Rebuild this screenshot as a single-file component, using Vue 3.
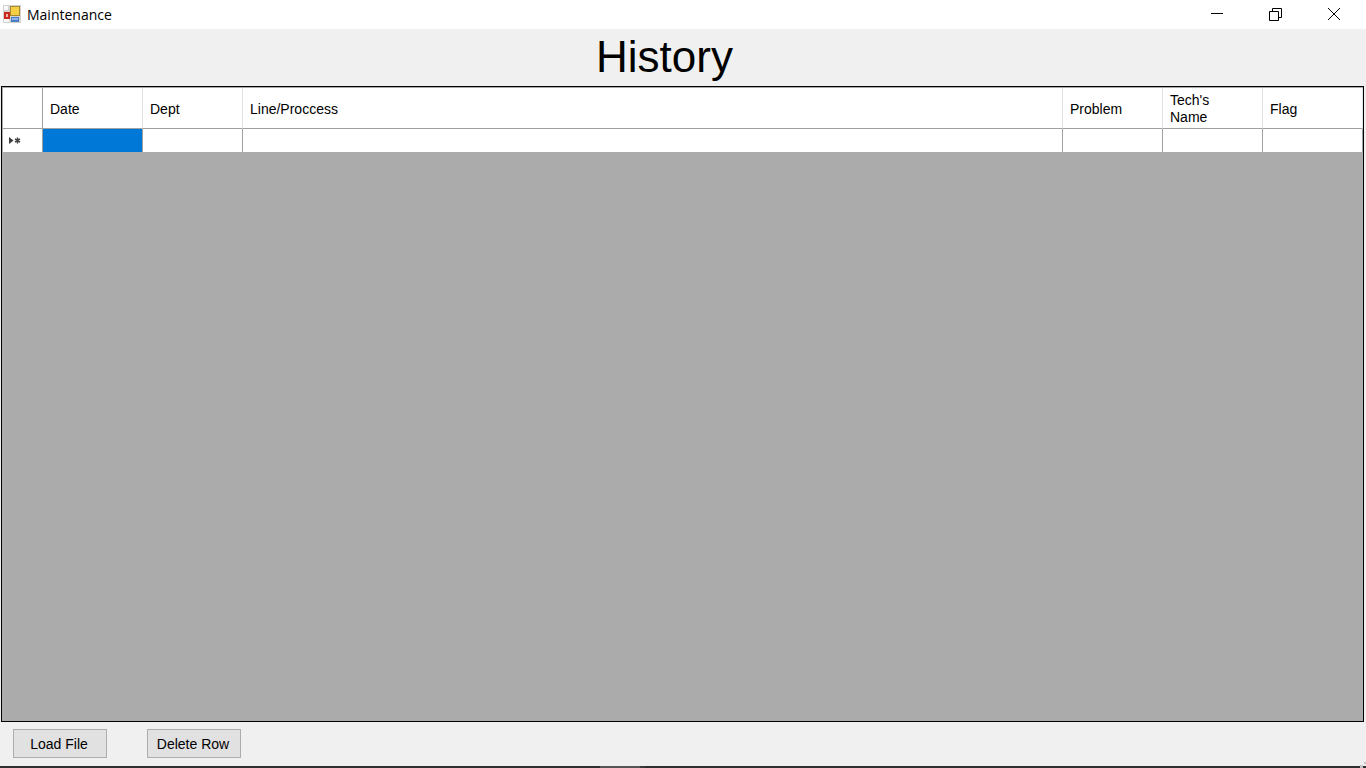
<script setup>
const cols = [
  { label: 'Date', cls: 'c-std' },
  { label: 'Dept', cls: 'c-std' },
  { label: 'Line/Proccess', cls: 'c-wide' },
  { label: 'Problem', cls: 'c-std' },
  { label: "Tech's Name", cls: 'c-std' },
  { label: 'Flag', cls: 'c-std' },
]
</script>

<template>
  <div class="window">
    <header class="titlebar">
      <svg class="app-icon" width="18" height="18" viewBox="0 0 18 18">
        <rect x="0" y="0" width="18" height="18" fill="#d2d2d2" />
        <rect x="1" y="1" width="4" height="4" fill="#f8f8f8" />
        <rect x="1" y="14" width="5" height="3" fill="#f8f8f8" />
        <rect x="1" y="7" width="6" height="7" fill="#c8281e" />
        <rect x="3" y="9" width="2" height="3" fill="#f0b8a8" />
        <rect x="7" y="1" width="10" height="10" fill="#a8882e" />
        <rect x="8" y="2" width="8" height="8" fill="#f7cf45" />
        <rect x="8" y="12" width="8" height="5" fill="#4a7cc8" />
        <rect x="9" y="13" width="6" height="2" fill="#8fb4ea" />
      </svg>
      <span class="app-title">Maintenance</span>
      <div class="win-controls">
        <svg class="ctl" width="58" height="29" viewBox="0 0 58 29">
          <path d="M22 13.5H34" stroke="#000" stroke-width="1" fill="none" />
        </svg>
        <svg class="ctl" width="58" height="29" viewBox="0 0 58 29">
          <path d="M22.5 11.5h9v9h-9zM25.5 11V8.5h9v9H32" stroke="#000" stroke-width="1" fill="none" />
        </svg>
        <svg class="ctl" width="58" height="29" viewBox="0 0 58 29">
          <path d="M23 8l12 12M35 8L23 20" stroke="#000" stroke-width="1" fill="none" />
        </svg>
      </div>
    </header>

    <h1 class="heading">History</h1>

    <section class="grid-box">
      <div class="grid-row head-row">
        <div class="cell rowhead head-cell"></div>
        <div v-for="c in cols" :key="c.label" class="cell head-cell" :class="c.cls">
          <span class="head-label">{{ c.label }}</span>
        </div>
      </div>
      <div class="grid-row new-row">
        <div class="cell rowhead body-cell">
          <svg width="13" height="7" viewBox="0 0 13 7">
            <path d="M0 0l4.5 3.5L0 7z" fill="#3c3c3c" />
            <path d="M8.5 0.5v6M6 2l5 3M11 2L6 5" stroke="#444" stroke-width="1.5" fill="none" />
          </svg>
        </div>
        <div
          v-for="(c, i) in cols"
          :key="c.label"
          class="cell body-cell"
          :class="[c.cls, { selected: i === 0 }]"
        ></div>
      </div>
      <div class="grid-empty"></div>
    </section>

    <footer class="actions">
      <button class="btn" type="button">Load File</button>
      <button class="btn" type="button">Delete Row</button>
    </footer>
    <div class="taskbar-edge">
      <span class="edge-a"></span>
      <span class="edge-b"></span>
    </div>
    <svg class="grip" width="6" height="6" viewBox="0 0 6 6">
      <rect x="4" y="0" width="2" height="2" fill="#c4c4c4" />
      <rect x="0" y="3" width="3" height="3" fill="#c4c4c4" />
    </svg>
  </div>
</template>

<style>
html, body {
  margin: 0;
  padding: 0;
  overflow: hidden;
}
</style>

<style scoped>
.window {
  position: relative;
  width: 1366px;
  height: 768px;
  display: flex;
  flex-direction: column;
  background: #f0f0f0;
  font-family: "Liberation Sans", Arial, sans-serif;
  color: #000;
  overflow: hidden;
}
.titlebar {
  height: 29px;
  flex: none;
  background: #fff;
  display: flex;
  align-items: center;
  padding-left: 3px;
}
.app-icon {
  flex: none;
  margin-top: -1px;
}
.app-title {
  margin-left: 6px;
  font-family: "Open Sans", "Noto Sans", sans-serif;
  font-size: 14px;
  line-height: 29px;
}
.win-controls {
  margin-left: auto;
  display: flex;
  margin-right: 3px;
}
.ctl {
  display: block;
}
.heading {
  height: 57px;
  flex: none;
  margin: 0;
  text-align: center;
  font-weight: 400;
  font-size: 44px;
  line-height: 56px;
  padding-right: 37px;
  box-sizing: border-box;
}
.grid-box {
  height: 636px;
  flex: none;
  margin: 0 2px 0 1px;
  box-sizing: border-box;
  border: 1px solid #000;
  background: #ababab;
  display: flex;
  flex-direction: column;
  padding: 0 0 0 1px;
}
.grid-row {
  display: flex;
  flex: none;
}
.head-row {
  height: 41px;
  margin-top: 1px;
}
.new-row {
  height: 23px;
}
.cell {
  box-sizing: border-box;
  background: #fff;
  flex: none;
}
.rowhead {
  width: 40px;
  border-right: 1px solid #a0a0a0;
  display: flex;
  align-items: center;
  padding-left: 6px;
}
.c-std {
  width: 100px;
}
.c-wide {
  width: 820px;
}
.head-cell {
  border-right: 1px solid #e3e3e3;
  border-bottom: 1px solid #a0a0a0;
  display: flex;
  align-items: center;
  padding: 2px 30px 0 7px;
  font-size: 14px;
  line-height: 17px;
}
.head-cell.rowhead {
  border-right-color: #a0a0a0;
}
.body-cell {
  border-right: 1px solid #a0a0a0;
}
.selected {
  background: #0078d7;
}
.grid-empty {
  flex: 1;
}
.actions {
  flex: 1;
  display: flex;
  gap: 40px;
  padding: 7px 0 0 13px;
  align-items: flex-start;
}
.btn {
  width: 94px;
  height: 29px;
  box-sizing: border-box;
  margin: 0;
  padding: 0 2px 0 0;
  border: 1px solid #adadad;
  background: #e1e1e1;
  font-family: "Liberation Sans", Arial, sans-serif;
  font-size: 14px;
  color: #000;
}
.taskbar-edge {
  height: 2px;
  flex: none;
  background: #2f2f2f;
  display: flex;
  padding-left: 600px;
}
.edge-a {
  width: 40px;
  background: #555;
}
.edge-b {
  width: 5px;
  background: #3a3a3a;
}
.grip {
  position: absolute;
  right: 0;
  bottom: 0;
}
</style>
